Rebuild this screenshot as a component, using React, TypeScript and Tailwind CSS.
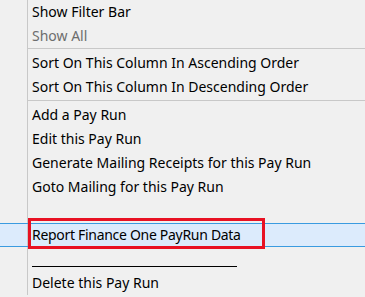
import React from "react";

type Item = { label: string; disabled?: boolean };

const Row = ({ label, disabled }: Item) => (
  <div className="flex h-6 items-center">
    <div className="h-full w-[28px] shrink-0 border-r border-[#c8c8c8]" />
    <span
      className={`pl-1 whitespace-nowrap ${disabled ? "text-[#6d6d6d]" : "text-black"}`}
    >
      {label}
    </span>
  </div>
);

const Separator = () => (
  <div className="flex h-[3px]">
    <div className="h-full w-[28px] shrink-0 border-r border-[#c8c8c8]" />
    <div className="h-px flex-1 bg-[#c8c8c8]" />
  </div>
);

export default function App() {
  return (
    <div
      className="relative h-[297px] w-[365px] overflow-hidden bg-[#f0f0f0] text-[14px] leading-none"
      style={{ fontFamily: '"Noto Sans", "Open Sans", sans-serif' }}
    >
      <Row label="Show Filter Bar" />
      <Row label="Show All" disabled />
      <Separator />
      <Row label="Sort On This Column In Ascending Order" />
      <Row label="Sort On This Column In Descending Order" />
      <div className="flex h-1">
        <div className="h-full w-[28px] shrink-0 border-r border-[#c8c8c8]" />
        <div className="mt-px h-px flex-1 bg-[#c8c8c8]" />
      </div>
      <Row label="Add a Pay Run" />
      <Row label="Edit this Pay Run" />
      <Row label="Generate Mailing Receipts for this Pay Run" />
      <Row label="Goto Mailing for this Pay Run" />
      <Row label="" />

      {/* highlighted item */}
      <div className="flex h-6 items-center border-y border-[#3a9be0] bg-[#dcebfc]">
        <div className="h-full w-[28px] shrink-0 border-r border-[#c8c8c8]" />
        <span className="pl-1 whitespace-nowrap tracking-[-0.3px] text-black">
          Report Finance One PayRun Data
        </span>
      </div>

      <div className="flex h-6">
        <div className="h-full w-[28px] shrink-0 border-r border-[#c8c8c8]" />
        <div className="ml-1 mt-[19px] h-px w-[205px] bg-black" />
      </div>
      <Row label="Delete this Pay Run" />
      <div className="flex h-[2px]">
        <div className="h-full w-[28px] shrink-0" />
      </div>

      {/* annotation box */}
      <div className="absolute left-[28px] top-[218px] h-[31px] w-[237px] border-[3px] border-[#e81123]" />
    </div>
  );
}
